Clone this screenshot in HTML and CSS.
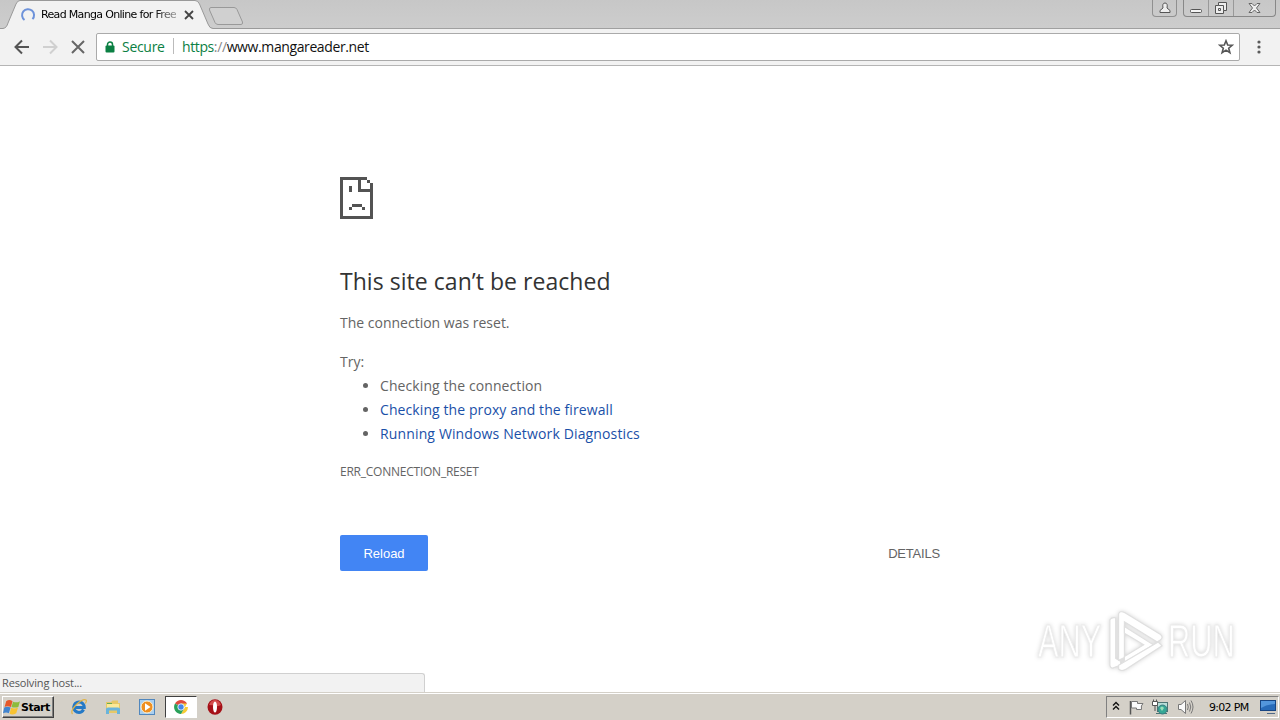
FILE: index.html
```
<!DOCTYPE html>
<html lang="en">
<head>
    <meta charset="UTF-8">
    <meta name="viewport" content="width=device-width, initial-scale=1.0">
    <title>Read Manga Online for Free</title>
    <link rel="stylesheet" href="styles.css">
</head>
<body>
    <header class="tabstrip">
        <svg class="tab-shapes" width="260" height="29" viewBox="0 0 260 29">
            <path d="M0 28.5H3C6 28 7 26 8 23L16 4Q17.500 .5 20 .5H195Q198 .5 199.500 4L208 24Q209.500 28.500 213 28.500V29H0Z" fill="#f2f2f2"/>
            <path d="M0 28.500H3C6 28 7 26 8 23L16 4Q17.500 .5 20 .5H195Q198 .5 199.500 4L208 24Q209.500 28.500 213 28.500H260" fill="none" stroke="#999"/>
            <path d="M211 7.500H234Q236 7.500 237 9.500L242.500 22Q243 24.500 241 24.500H218Q216 24.500 215 22.500L209.500 10Q209 7.500 211 7.500Z" fill="#d0d0d0" stroke="#999"/>
        </svg>
        <div class="tab">
            <svg width="16" height="16" viewBox="0 0 16 16"><path d="M4.500 13A6 6 0 1 1 12.500 12.200" fill="none" stroke="#6d92da" stroke-width="2"/></svg>
            <span class="tab-title">Read Manga Online for Free</span>
            <svg width="10" height="10" viewBox="0 0 10 10"><path d="M1 1L9 9M9 1L1 9" stroke="#444" stroke-width="1.800"/></svg>
        </div>
        <div class="window-buttons">
            <div class="user">
                <svg width="12" height="12" viewBox="0 0 12 12"><path d="M4 6Q3 1 6 1T8 6L11 8.500V10.500H1V8.500Z" fill="#eee" stroke="#555"/></svg>
            </div>
            <div class="controls">
                <span class="minimize"><svg width="14" height="12" viewBox="0 0 14 12"><rect x="1.500" y="7.500" width="11" height="3" rx="1" fill="#f4f4f4" stroke="#555"/></svg></span>
                <span class="restore"><svg width="14" height="14" viewBox="0 0 14 14"><path d="M4.500 1.500H12.500V9.500H9.500V12.500H1.500V4.500H4.500Z" fill="#eee" stroke="#555"/><path d="M4.500 4.500H9.500V9.500M4.500 7.500H6.500V9.500H4.500Z" fill="none" stroke="#555"/></svg></span>
                <span class="close"><svg width="13" height="12" viewBox="0 0 13 12"><path d="M1 1.500H4L6.500 4L9 1.500H12L8.500 6L12 10.500H9L6.500 8L4 10.500H1L4.500 6Z" fill="#eee" stroke="#666"/></svg></span>
            </div>
        </div>
    </header>

    <nav class="toolbar">
        <svg class="nav-icons" width="88" height="20" viewBox="0 0 88 20" fill="none" stroke-width="2">
            <path d="M29 10H16M22 3.500L15.500 10L22 16.500" stroke="#555"/>
            <path d="M43 10H56M50 3.500L56.500 10L50 16.500" stroke="#d0d0d0"/>
            <path d="M72 4L84 16M84 4L72 16" stroke="#666"/>
        </svg>
        <div class="omnibox">
            <svg class="lock" width="10" height="12" viewBox="0 0 10 12"><path d="M2.500 5V3.500A2.500 2.500 0 0 1 7.500 3.500V5" fill="none" stroke="#0b8043" stroke-width="1.500"/><rect x=".5" y="4.500" width="9" height="7" rx="1" fill="#0b8043"/></svg>
            <span class="secure">Secure</span>
            <span class="divider"></span>
            <span class="url"><span class="scheme">https</span><span class="slashes">://</span>www.mangareader.net</span>
            <svg class="star" width="16" height="16" viewBox="0 0 16 16"><path d="M8 1.800L9.700 6L14.200 6.300L10.700 9.200L11.900 13.700L8 11.200L4.100 13.700L5.300 9.200L1.800 6.300L6.300 6Z" fill="none" stroke="#555" stroke-width="1.600"/></svg>
        </div>
        <svg class="menu" width="4" height="14" viewBox="0 0 4 14" fill="#5a5a5a"><circle cx="2" cy="2" r="1.600"/><circle cx="2" cy="7" r="1.600"/><circle cx="2" cy="12" r="1.600"/></svg>
    </nav>

    <main class="page">
        <div class="error">
            <svg class="sad-file" width="33" height="42" viewBox="0 0 33 42" fill="#535353" shape-rendering="crispEdges">
                <path d="M0 0H27V3H21V12H30V6H33V42H0ZM3 3V39H30V15H18V3Z" fill-rule="evenodd"/>
                <path d="M27 3H30V6H27ZM9 9H12V15H9ZM12 27H22V30H12ZM9 30H12V33H9ZM22 30H25V33H22Z"/>
            </svg>
            <h1>This site can’t be reached</h1>
            <p class="summary">The connection was reset.</p>
            <p class="try">Try:</p>
            <ul>
                <li><span class="tip">Checking the connection</span></li>
                <li><a class="proxy">Checking the proxy and the firewall</a></li>
                <li><a class="diagnostics">Running Windows Network Diagnostics</a></li>
            </ul>
            <p class="code">ERR_CONNECTION_RESET</p>
            <div class="buttons">
                <button class="reload">Reload</button>
                <span class="details">DETAILS</span>
            </div>
        </div>

        <div class="watermark">
            <span>ANY</span>
            <svg width="58" height="64" viewBox="0 0 60 64" fill="#fff" stroke="#e0e0e0" stroke-width="1.200">
                <path d="M3 10Q5 7 9 8V50L14 53V57L6 60Q3 60 3 56Z"/>
                <path d="M12 4Q13 0 19 3L55 25Q59 28 55 31L52 33L18 12V49L12 52Z"/>
                <path d="M18 17L48 36L18 54V48L38 36L18 24Z"/>
                <path d="M12 57L53 33L57 37L20 61Q15 64 12 61Z"/>
            </svg>
            <span>RUN</span>
        </div>
        <div class="status">Resolving host...</div>
    </main>

    <footer class="taskbar">
        <div class="start">
            <svg width="18" height="17" viewBox="0 0 17 16"><path d="M3 2Q6 0 9 2L7.500 7.500Q4 6 1.500 7.500Z" fill="#e5582b"/><path d="M9.500 2.500Q13 4 16 2L14.500 7.500Q11 8.500 8 7.500Z" fill="#8dbb3c"/><path d="M1.200 8Q4 6.500 7.200 8L5.500 13.500Q3 12 0 13.500Z" fill="#4184cf"/><path d="M7.700 8.300Q11 9.500 14.200 8L12.500 13.500Q9 15.500 6.200 14Z" fill="#f8c332"/></svg>
            <span>Start</span>
        </div>
        <div class="launchers">
            <span class="launcher"><svg width="16" height="16" viewBox="0 0 16 16"><path d="M12.500 10.500Q11 13.500 8 13.500A5.300 5.300 0 1 1 13.300 8.500H4" fill="none" stroke="#2479c6" stroke-width="3"/><path d="M1.500 15Q-1 12 5.500 5.500Q12 -.5 15 1Q16 2 14.300 4.500" fill="none" stroke="#e0b345" stroke-width="1.200"/></svg></span>
            <span class="launcher"><svg width="16" height="16" viewBox="0 0 16 16"><path d="M1 3H6L7.500 1.500H13V4H15V14H1Z" fill="#e6c868"/><path d="M2 5H14V10H2Z" fill="#fbe997"/><path d="M2 4H7V5H2Z" fill="#68ac54"/><path d="M1 15V10Q1 8.500 3 8.500H13Q15 8.500 15 10V15H12V11.500H4V15Z" fill="#69b4dc"/></svg></span>
            <span class="launcher"><svg width="16" height="16" viewBox="0 0 16 16"><rect x=".5" y=".5" width="15" height="15" fill="#a9cff0" stroke="#5187bd"/><circle cx="8" cy="8" r="6" fill="#ef8f20" stroke="#fff0d0"/><path d="M6 4.300L11.500 8L6 11.700Z" fill="#fff"/></svg></span>
            <span class="launcher active"><svg width="14" height="14" viewBox="0 0 14 14"><path d="M7 7L1 3.500A7 7 0 0 1 13 3.500Z" fill="#df4b3e"/><path d="M7 7H14A7 7 0 0 1 7 14L10 8.700L13 3.500H7Z" fill="#f7cc34"/><path d="M7 7L10 8.700L7 14A7 7 0 0 1 1 3.500Z" fill="#2aa15a"/><circle cx="7" cy="7" r="3.200" fill="#4387ea" stroke="#fff" stroke-width=".8"/></svg></span>
            <span class="launcher"><svg width="16" height="16" viewBox="0 0 16 16"><ellipse cx="8" cy="8" rx="7.500" ry="7.800" fill="#a51017"/><path d="M2 6Q4 1 8 1T14 6Q10 8 8 7T2 6" fill="#d34b4b"/><ellipse cx="8" cy="8" rx="2" ry="5.500" fill="#fff"/></svg></span>
        </div>
        <div class="tray">
            <svg class="expand" width="8" height="10" viewBox="0 0 8 10"><path d="M1 4.500L4 1.500L7 4.500M1 8.500L4 5.500L7 8.500" fill="none" stroke="#111" stroke-width="1.400"/></svg>
            <svg width="16" height="16" viewBox="0 0 16 16"><path d="M2.500 2V15.500" stroke="#555" stroke-width="1.500"/><path d="M3.500 2.500H9.500V4.500H15Q12.500 6.500 13.500 10.500H8.500V9H3.500Z" fill="#fafafa" stroke="#777"/></svg>
            <svg width="17" height="16" viewBox="0 0 17 16"><rect x="5.500" y="3.500" width="10" height="9" fill="#b8ded8" stroke="#4d7474"/><path d="M4 14.500H15M10.500 12V14" stroke="#4d7474"/><circle cx="10.500" cy="10.500" r="4.500" fill="#35a795" stroke="#397b80"/><path d="M8 9Q10 6 12 9L10 12Z" fill="#9adeb9"/><path d="M1.500 3V.5M4.500 3V.5M.5 2.500H5.500V6.500H.5ZM3 7V12" fill="#fff" stroke="#555"/></svg>
            <svg width="17" height="16" viewBox="0 0 17 16" fill="none" stroke="#777"><path d="M1.500 5.500H4L8.500 1.500V14.500L4 10.500H1.500Z" fill="#fafafa"/><path d="M10.500 5Q12 8 10.500 11M12.500 3.500Q15 8 12.500 12.500M14 1.500Q18 8 14 14.500"/></svg>
            <span class="clock">9:02 PM</span>
            <svg class="desktop" width="16" height="14" viewBox="0 0 16 14"><rect x=".5" y=".5" width="15" height="10" fill="#286bb9" stroke="#174583"/><path d="M1 1H15V4Q7 4 1 8Z" fill="#5396dc"/><path d="M7 13.500H15" stroke="#506987"/></svg>
        </div>
    </footer>
</body>
</html>
```
FILE: styles.css
```
* {
    box-sizing: border-box;
}
body {
    margin: 0;
    height: 100vh;
    display: flex;
    flex-direction: column;
    overflow: hidden;
    background: #fff;
    font-family: "Open Sans", "Noto Sans", sans-serif;
}
svg {
    display: block;
    flex: none;
}
.tabstrip {
    position: relative;
    height: 29px;
    display: flex;
    justify-content: space-between;
    background: linear-gradient(#c7c7c7, #cdcdcd);
    border-bottom: 1px solid #a0a0a0;
}
.tab-shapes {
    position: absolute;
    left: 0;
    top: 0;
}
.tab {
    position: relative;
    height: 29px;
    display: flex;
    align-items: center;
    padding-left: 20px;
}
.tab-title {
    width: 135px;
    margin: 0 8px 0 5px;
    overflow: hidden;
    white-space: nowrap;
    font: 11px "DejaVu Sans", sans-serif;
    letter-spacing: -0.67px;
    -webkit-mask-image: linear-gradient(90deg, #000 112px, rgba(0,0,0,0.35));
}
.window-buttons {
    display: flex;
    height: 17px;
    padding-right: 4px;
}
.user {
    width: 25px;
    margin-right: 6px;
    padding: 2px 0 0 6px;
    border: 1px solid #909090;
    border-top: none;
    border-radius: 0 0 4px 4px;
}
.controls {
    display: flex;
    width: 93px;
    border: 1px solid #888;
    border-top: none;
    border-radius: 0 0 4px 4px;
}
.controls span {
    display: flex;
    align-items: center;
    justify-content: center;
    border-right: 1px solid #999;
}
.minimize, .restore {
    width: 25px;
}
.controls .close {
    flex: 1;
    border: none;
}
.toolbar {
    height: 37px;
    display: flex;
    align-items: center;
    background: #f2f2f2;
    border-bottom: 1px solid #b5b5b5;
}
.omnibox {
    width: 1144px;
    height: 28px;
    margin-left: 8px;
    display: flex;
    align-items: center;
    padding: 0 5px 2px 8px;
    background: #fff;
    border: 1px solid #aaa;
    border-radius: 2px;
    font-size: 14px;
    color: #0b8043;
}
.secure {
    margin-left: 7px;
    width: 43px;
    letter-spacing: -0.3px;
}
.divider {
    width: 1px;
    height: 16px;
    margin: 0 8px;
    background: #bbb;
}
.url {
    color: #111;
    letter-spacing: -0.39px;
}
.scheme {
    color: #0b8043;
}
.slashes {
    color: #888;
}
.lock {
    margin-top: 1px;
}
.star {
    margin-left: auto;
    margin-top: 2px;
}
.menu {
    margin-left: 17px;
}
.page {
    position: relative;
    flex: 1;
}
.error {
    width: 600px;
    margin: 0 auto;
    padding-top: 111px;
    font-size: 14px;
    color: #646464;
}
h1 {
    margin: 45px 0 0;
    font-size: 23px;
    line-height: 34px;
    font-weight: 400;
    color: #333;
    letter-spacing: 0.04px;
}
p {
    margin: 0;
}
.summary {
    margin-top: 13px;
    line-height: 24px;
}
.try {
    margin-top: 15px;
    line-height: 24px;
}
ul {
    margin: 0;
    padding-left: 40px;
    line-height: 24px;
}
a {
    color: #1a50a8;
}
.tip, .proxy {
    letter-spacing: 0.09px;
}
.diagnostics {
    letter-spacing: 0.14px;
}
.code {
    margin-top: 16px;
    font-size: 12px;
    line-height: 20px;
    letter-spacing: -0.24px;
}
.buttons {
    margin-top: 53px;
    display: flex;
    justify-content: space-between;
    align-items: center;
}
.reload {
    width: 88px;
    height: 36px;
    padding: 0;
    border: none;
    border-radius: 2px;
    background: #4285f4;
    color: #fff;
    font: 13px "Liberation Sans", Arial, sans-serif;
}
.details {
    font: 13px "Liberation Sans", Arial, sans-serif;
    letter-spacing: -0.2px;
}
.watermark {
    position: absolute;
    left: 1038px;
    bottom: 19px;
    display: flex;
    align-items: center;
    filter: drop-shadow(0 0 2px #d4d4d4);
}
.watermark span {
    width: 65px;
    font: 46px/64px "Liberation Sans", sans-serif;
    color: #fff;
    -webkit-text-stroke: 1px #ececec;
    transform: scaleX(0.67);
    transform-origin: left;
}
.watermark svg {
    margin: 0 3px 0 4px;
}
.status {
    position: absolute;
    left: 0;
    bottom: 0;
    width: 425px;
    height: 19px;
    padding-left: 2px;
    background: #f2f2f2;
    border: 1px solid #d0d0d0;
    border-left: none;
    border-bottom: none;
    border-radius: 0 3px 0 0;
    font-size: 11px;
    line-height: 18px;
    letter-spacing: -0.15px;
    color: #555;
}
.taskbar {
    height: 28px;
    display: flex;
    align-items: center;
    padding: 1px 0 0 2px;
    background: #d4d0c8;
    border-top: 1px solid #d4d0c8;
    box-shadow: inset 0 1px #fff;
}
.start {
    width: 52px;
    height: 22px;
    display: flex;
    align-items: center;
    border: 1px solid;
    border-color: #fff #404040 #404040 #fff;
    box-shadow: inset -1px -1px #808080;
    font: bold 11px "DejaVu Sans", sans-serif;
    letter-spacing: -0.5px;
}
.launchers {
    display: flex;
    gap: 2px;
    margin-left: 9px;
}
.launcher {
    width: 32px;
    height: 22px;
    display: flex;
    align-items: center;
    justify-content: center;
}
.active {
    background: #fff;
    border: 1px solid;
    border-color: #404040 #fff #fff #404040;
}
.tray {
    width: 173px;
    height: 22px;
    margin-left: auto;
    margin-right: 1px;
    display: flex;
    align-items: center;
    gap: 8px;
    padding-left: 5px;
    border: 1px solid;
    border-color: #808080 #fff #fff #808080;
}
.expand {
    margin-bottom: 3px;
}
.clock {
    width: 43px;
    margin-left: 7px;
    white-space: nowrap;
    font: 11px "DejaVu Sans", sans-serif;
    letter-spacing: -0.7px;
}
```
